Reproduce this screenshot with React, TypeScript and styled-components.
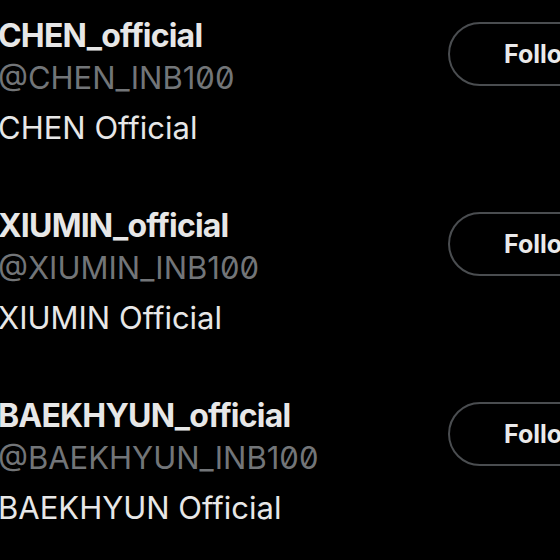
import React from "react";
import styled, { createGlobalStyle } from "styled-components";

const Global = createGlobalStyle`
  html, body { margin: 0; padding: 0; background: #000; }
  body { width: 560px; height: 560px; overflow: hidden; font-family: Inter, "Noto Sans", sans-serif; }
`;

const List = styled.div`
  display: flex;
  flex-direction: column;
  padding-top: 16px;
  margin-left: -2px;
  width: 700px;
`;

const Row = styled.div`
  display: flex;
  align-items: flex-start;
  height: 190px;
`;

const Info = styled.div`
  display: flex;
  flex-direction: column;
  width: 450px;
  padding-top: 8px;
`;

const Name = styled.div`
  color: #e7e7e7;
  font-size: 32px;
  font-weight: 700;
  line-height: 24px;
  letter-spacing: -0.8px;
`;

const Handle = styled.div`
  color: #727578;
  font-size: 31px;
  font-weight: 400;
  line-height: 60px;
  font-feature-settings: "zero" 1;
`;

const Display = styled.div`
  color: #e7e7e7;
  font-size: 31px;
  font-weight: 400;
  line-height: 40px;
`;

const FollowButton = styled.button`
  margin-top: 6px;
  height: 64px;
  width: 200px;
  border-radius: 32px;
  border: 2px solid #4a4d50;
  background: #000;
  color: #eaeaea;
  font-family: Inter, "Noto Sans", sans-serif;
  font-size: 25px;
  font-weight: 700;
  text-align: left;
  padding: 0 0 0 54px;
  flex-shrink: 0;
`;

const members = [
  { name: "CHEN_official", handle: "@CHEN_INB100", display: "CHEN Official" },
  { name: "XIUMIN_official", handle: "@XIUMIN_INB100", display: "XIUMIN Official" },
  { name: "BAEKHYUN_official", handle: "@BAEKHYUN_INB100", display: "BAEKHYUN Official" },
];

export default function App() {
  return (
    <>
      <Global />
      <List>
        {members.map((m) => (
          <Row key={m.handle}>
            <Info>
              <Name>{m.name}</Name>
              <Handle>{m.handle}</Handle>
              <Display>{m.display}</Display>
            </Info>
            <FollowButton>Follow</FollowButton>
          </Row>
        ))}
      </List>
    </>
  );
}
